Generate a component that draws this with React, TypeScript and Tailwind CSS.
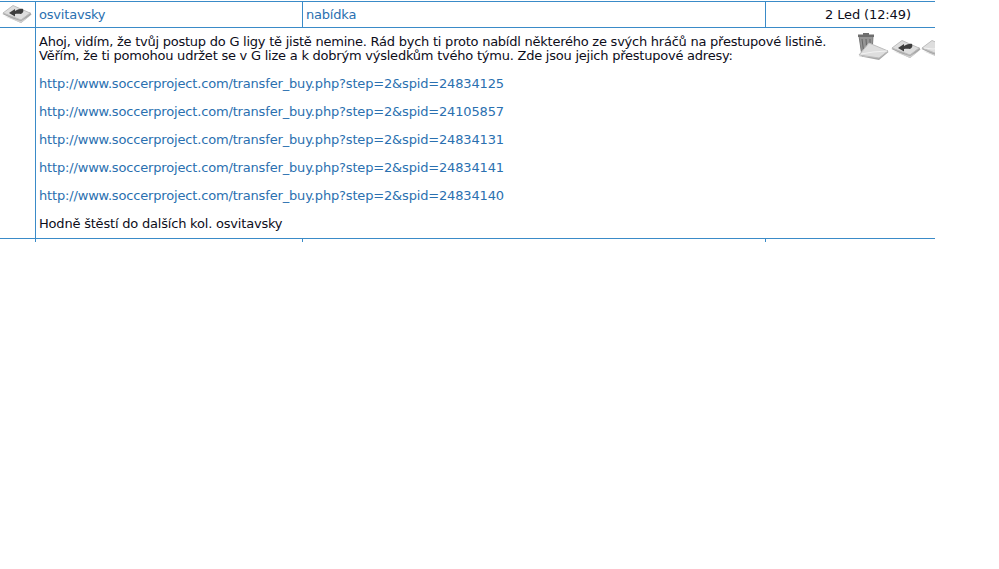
import React from "react";

const links = ["24834125", "24105857", "24834131", "24834141", "24834140"];

const MailBase = () => (
  <>
    <path d="M0.5 9 L19 18 L29.5 9.5 L28 7 L19 14 L2 7 Z" fill="#a8a8a8" />
    <path d="M2 11 L19 18 L28 11 L19 16 Z" fill="#cfcfcf" />
    <path d="M1 8 L11 0.5 L28 8 L19 15 Z" fill="#dedede" stroke="#bdbdbd" strokeWidth="1" strokeLinejoin="round" />
  </>
);

const ReplyIcon = ({ className }: { className: string }) => (
  <svg viewBox="0 0 30 18" className={className}>
    <MailBase />
    <path d="M7 8 L13 4 L13 6 C16 4.5 19 3.5 21 4 C22 6 21 8 19 9 C17 8.5 15 8.5 13 9 L13 11.5 Z" fill="#3d3d3d" />
  </svg>
);

const PlainIcon = ({ className }: { className: string }) => (
  <svg viewBox="0 0 30 18" className={className}>
    <MailBase />
    <path d="M3 8 L12 9 L26 7" fill="none" stroke="#f2f2f2" strokeWidth="1" />
  </svg>
);

const TrashIcon = () => (
  <svg viewBox="0 0 31 27" className="h-[27px] w-[31px] shrink-0">
    <path d="M1 3 L15 3 L14 20 L4 23 Z" fill="#969696" stroke="#7a7a7a" strokeWidth="1" />
    <path d="M0 1.5 L16 1.5 L16 4 L0 4 Z M5 0 L11 0 L11 2 L5 2 Z" fill="#6e6e6e" />
    <path d="M4 6 L6 21 M8 6 L9 20 M12 6 L12 20" stroke="#666666" strokeWidth="1" />
    <path d="M0.5 23 L21 27 L30.5 19 L29 17 L21 24 Z" fill="#a8a8a8" />
    <path d="M1 22 L11 10 L30 18 L21 25 Z" fill="#dedede" stroke="#bdbdbd" strokeWidth="1" strokeLinejoin="round" />
    <path d="M3 21 L15 19 L29 18" fill="none" stroke="#f2f2f2" strokeWidth="1" />
  </svg>
);

export default function App() {
  return (
    <div className="h-[569px] w-[999px] overflow-hidden bg-white font-['DejaVu_Sans',sans-serif] text-[13px] leading-[14px] tracking-[-0.2px] text-[#0d0d1a]">
      <div className="w-[935px] pt-px">
        {/* header row */}
        <div className="flex h-[27px] border-y border-[#3a8bc8]">
          <div className="w-[36px] shrink-0 border-r border-[#3a8bc8] pl-[2px] pt-[3px]">
            <ReplyIcon className="h-[18px] w-[30px]" />
          </div>
          <div className="w-[267px] shrink-0 border-r border-[#3a8bc8] pl-[3px] pt-[6px] text-[#2a70b0]">osvitavsky</div>
          <div className="w-[463px] shrink-0 border-r border-[#3a8bc8] pl-[3px] pt-[6px] text-[#2a70b0]">nabídka</div>
          <div className="flex-1 pl-[59px] pt-[6px] tracking-[-0.12px]">2 Led (12:49)</div>
        </div>

        {/* message row */}
        <div className="flex h-[210px]">
          <div className="w-[36px] shrink-0 border-r border-[#3a8bc8]" />
          <div className="flex min-w-0 flex-1 overflow-hidden pl-[3px] pt-[7px]">
            <div className="w-[819px] shrink-0">
              <p className="tracking-[-0.24px]">Ahoj, vidím, že tvůj postup do G ligy tě jistě nemine. Rád bych ti proto nabídl některého ze svých hráčů na přestupové listině.</p>
              <p className="tracking-[-0.23px]">Věřím, že ti pomohou udržet se v G lize a k dobrým výsledkům tvého týmu. Zde jsou jejich přestupové adresy:</p>
              {links.map((id) => (
                <p key={id} className="mt-[14px] tracking-[-0.165px] text-[#2a70b0]">
                  http://www.soccerproject.com/transfer_buy.php?step=2&amp;spid={id}
                </p>
              ))}
              <p className="mt-[14px]">Hodně štěstí do dalších kol. osvitavsky</p>
            </div>
            <div className="-mt-[2px] flex shrink-0">
              <TrashIcon />
              <ReplyIcon className="ml-[2px] mt-[7px] h-[18px] w-[30px] shrink-0" />
              <PlainIcon className="mt-[7px] h-[18px] w-[30px] shrink-0" />
            </div>
          </div>
        </div>

        {/* closing row */}
        <div className="flex h-[4px] border-t border-[#3a8bc8]">
          <div className="w-[36px] border-r border-[#3a8bc8]" />
          <div className="w-[267px] border-r border-[#3a8bc8]" />
          <div className="w-[463px] border-r border-[#3a8bc8]" />
        </div>
      </div>
    </div>
  );
}
